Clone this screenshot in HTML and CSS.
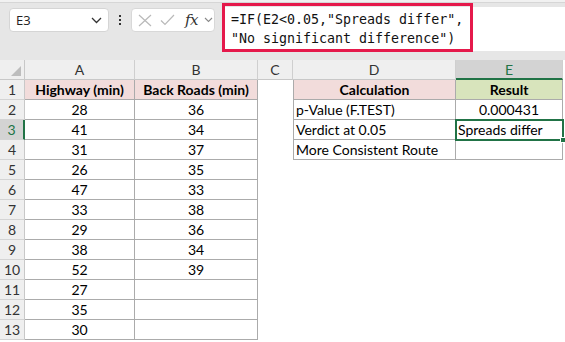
FILE: index.html
```html
<!DOCTYPE html>
<html>
<head>
<meta charset="utf-8">
<link rel="stylesheet" href="styles.css">
</head>
<body>
<div class="app">
  <div class="topstrip"></div>
  <div class="toolbar">
    <div class="namebox">
      <span class="nb-text">E3</span>
      <svg class="chev" width="11" height="7" viewBox="0 0 11 7"><path d="M1 1 L5.5 5.5 L10 1" fill="none" stroke="#333" stroke-width="1.3"/></svg>
    </div>
    <div class="vdots"><span></span><span></span><span></span></div>
    <div class="fxbox">
      <svg class="ico" width="14" height="13" viewBox="0 0 14 13"><path d="M1 1 L13 12 M13 1 L1 12" fill="none" stroke="#b9b9b9" stroke-width="1.2"/></svg>
      <svg class="ico" width="15" height="12" viewBox="0 0 15 12"><path d="M1 6.5 L5 10.5 L14 1" fill="none" stroke="#b9b9b9" stroke-width="1.2"/></svg>
      <span class="fx">fx</span>
      <svg class="chev2" width="9" height="6" viewBox="0 0 9 6"><path d="M1 1 L4.5 4.5 L8 1" fill="none" stroke="#888" stroke-width="1.1"/></svg>
    </div>
    <div class="formula">
      <div class="fbox">=IF(E2&lt;0.05,"Spreads differ",<br>"No significant difference")</div>
    </div>
  </div>
  <div class="grid">
    <div class="corner"><span class="tri"></span></div>
    <div class="ch">A</div>
    <div class="ch">B</div>
    <div class="ch">C</div>
    <div class="ch">D</div>
    <div class="ch sel">E</div>

    <div class="rh">1</div>
    <div class="c ta hd">Highway (min)</div>
    <div class="c ta hd">Back Roads (min)</div>
    <div class="c cc"></div>
    <div class="c td dl hd">Calculation</div>
    <div class="c td hd green">Result</div>

    <div class="rh">2</div>
    <div class="c ta">28</div>
    <div class="c ta">36</div>
    <div class="c cc"></div>
    <div class="c td dl left">p-Value (F.TEST)</div>
    <div class="c td">0.000431</div>

    <div class="rh sel">3</div>
    <div class="c ta">41</div>
    <div class="c ta">34</div>
    <div class="c cc"></div>
    <div class="c td dl left">Verdict at 0.05</div>
    <div class="c td left active">Spreads differ<span class="handle"></span></div>

    <div class="rh">4</div>
    <div class="c ta">31</div>
    <div class="c ta">37</div>
    <div class="c cc"></div>
    <div class="c td dl left">More Consistent Route</div>
    <div class="c td"></div>

    <div class="rh">5</div>
    <div class="c ta">26</div>
    <div class="c ta">35</div>
    <div class="c cc"></div>
    <div class="c"></div>
    <div class="c"></div>

    <div class="rh">6</div>
    <div class="c ta">47</div>
    <div class="c ta">33</div>
    <div class="c cc"></div>
    <div class="c"></div>
    <div class="c"></div>

    <div class="rh">7</div>
    <div class="c ta">33</div>
    <div class="c ta">38</div>
    <div class="c cc"></div>
    <div class="c"></div>
    <div class="c"></div>

    <div class="rh">8</div>
    <div class="c ta">29</div>
    <div class="c ta">36</div>
    <div class="c cc"></div>
    <div class="c"></div>
    <div class="c"></div>

    <div class="rh">9</div>
    <div class="c ta">38</div>
    <div class="c ta">34</div>
    <div class="c cc"></div>
    <div class="c"></div>
    <div class="c"></div>

    <div class="rh">10</div>
    <div class="c ta">52</div>
    <div class="c ta">39</div>
    <div class="c cc"></div>
    <div class="c"></div>
    <div class="c"></div>

    <div class="rh">11</div>
    <div class="c ta">27</div>
    <div class="c ta"></div>
    <div class="c cc"></div>
    <div class="c"></div>
    <div class="c"></div>

    <div class="rh">12</div>
    <div class="c ta">35</div>
    <div class="c ta"></div>
    <div class="c cc"></div>
    <div class="c"></div>
    <div class="c"></div>

    <div class="rh">13</div>
    <div class="c ta">30</div>
    <div class="c ta"></div>
    <div class="c cc"></div>
    <div class="c"></div>
    <div class="c"></div>
  </div>
</div>
</body>
</html>
```
FILE: styles.css
```css
* { box-sizing: border-box; }
html, body { margin: 0; padding: 0; background: #fff; }
body { width: 565px; height: 342px; overflow: hidden; font-family: "Lato", "Carlito", sans-serif; }
.app { width: 565px; }
.topstrip { height: 3px; background: #f1f1f1; border-bottom: 1px solid #d6d6d6; }
.toolbar { height: 57px; background: #e6e6e6; display: flex; align-items: flex-start; padding-left: 9px; }
.namebox { margin-top: 5px; width: 100px; height: 24px; background: #fff; border: 1px solid #d5d5d5; border-radius: 4px; display: flex; align-items: center; justify-content: space-between; padding: 0 6px 0 6px; }
.nb-text { font-family: "Open Sans", "Noto Sans", sans-serif; font-size: 13px; color: #222; }
.chev { margin-top: 1px; }
.vdots { width: 22px; height: 24px; margin-top: 5px; display: flex; flex-direction: column; align-items: center; justify-content: center; gap: 2px; }
.vdots span { width: 2px; height: 2px; background: #333; display: block; }
.fxbox { margin-top: 5px; width: 84px; height: 24px; background: #fff; border: 1px solid #d8d8d8; border-radius: 4px; display: flex; align-items: center; padding-left: 6px; }
.fxbox .ico { margin-right: 8px; }
.fx { font-family: "DejaVu Serif", "Liberation Serif", serif; font-style: italic; font-size: 15px; color: #333; margin-left: 2px; letter-spacing: -0.5px; }
.chev2 { margin-left: 6px; }
.formula { margin-left: 7px; margin-top: 4px; flex: 1; height: 44px; background: #fff; }
.fbox { width: 251px; height: 49px; margin-top: -4px; border: 3px solid #e5194b; padding: 4px 0 0 6px; font-family: "DejaVu Sans Mono", "Liberation Mono", monospace; font-size: 13.3px; line-height: 19px; color: #111; white-space: nowrap; }

.grid { display: grid; grid-template-columns: 25px 110px 123px 35px 163px 107px; grid-auto-rows: 20px; }
.corner { background: #efefef; border-right: 1px solid #c8c8c8; border-bottom: 1px solid #c8c8c8; position: relative; }
.tri { position: absolute; right: 3px; bottom: 3px; width: 0; height: 0; border-left: 10px solid transparent; border-bottom: 10px solid #bdbdbd; }
.ch { background: #efefef; border-right: 1px solid #cfcfcf; border-bottom: 1px solid #c8c8c8; text-align: center; font-size: 14px; line-height: 19px; color: #333; }
.ch.sel { background: #d3d3d3; border-bottom: 2px solid #217346; color: #217346; }
.rh { background: #efefef; border-right: 1px solid #c8c8c8; border-bottom: 1px solid #d4d4d4; text-align: center; font-size: 14px; line-height: 20px; color: #333; }
.rh.sel { background: #d3d3d3; border-right: 2px solid #217346; color: #217346; }
.c { font-size: 14px; line-height: 20px; color: #000; text-align: center; white-space: nowrap; position: relative; }
.ta, .td { border-right: 1px solid #ababab; border-bottom: 1px solid #ababab; }
.dl { border-left: 1px solid #ababab; }
.hd { font-weight: bold; background: #f2dcdb; }
.hd.green { background: #d8e4bc; }
.left { text-align: left; padding-left: 2px; }
.active { outline: 2px solid #217346; outline-offset: -1px; z-index: 2; }
.handle { position: absolute; right: -4px; bottom: -4px; width: 6px; height: 6px; background: #217346; border: 1px solid #fff; }
```
